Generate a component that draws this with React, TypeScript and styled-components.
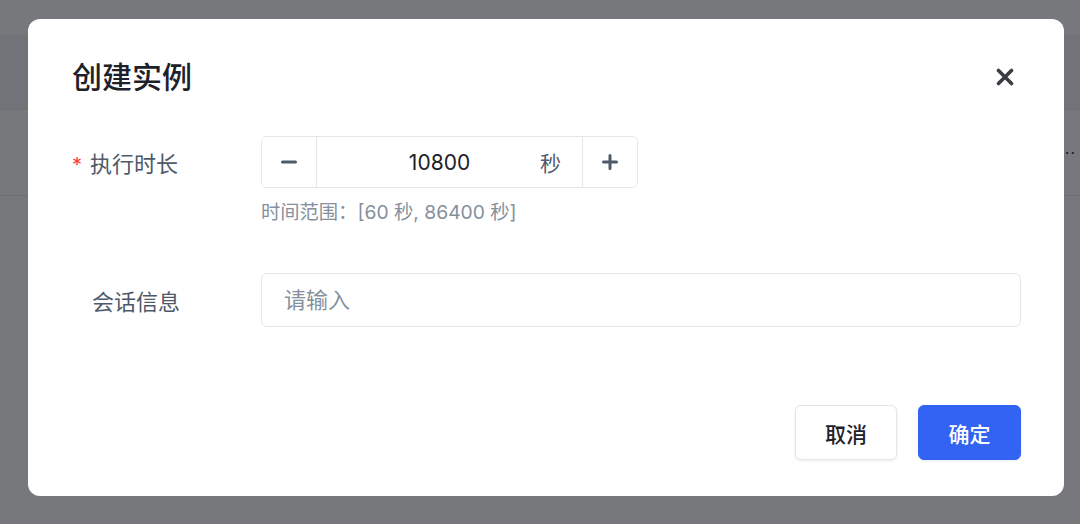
import React from 'react';
import styled, { createGlobalStyle } from 'styled-components';

const GlobalStyle = createGlobalStyle`
  html, body {
    margin: 0;
    padding: 0;
    background: #ffffff;
  }
  body {
    font-family: "Inter", "Noto Sans CJK SC", sans-serif;
    -webkit-font-smoothing: antialiased;
  }
  * {
    box-sizing: border-box;
  }
`;

// 背后的页面
const Page = styled.div`
  width: 1080px;
  height: 524px;
  overflow: hidden;
  background: #ffffff;
`;

const TopBar = styled.div`
  height: 35px;
  background: #ffffff;
`;

const TableHead = styled.div`
  height: 75px;
  background: #f2f3f5;
  border-bottom: 1px solid #e5e6eb;
`;

const TableRow = styled.div`
  height: 86px;
  display: flex;
  align-items: center;
  justify-content: flex-end;
  padding-right: 4px;
  border-bottom: 1px solid #e5e6eb;
  color: #1d2129;
  font-size: 16px;
  letter-spacing: 1px;
`;

// 遮罩层
const Mask = styled.div`
  position: fixed;
  inset: 0;
  background: rgba(29, 30, 36, 0.6);
  display: flex;
  align-items: flex-start;
  padding: 19px 0 0 28px;
`;

const Modal = styled.div`
  width: 1036px;
  height: 477px;
  background: #ffffff;
  border-radius: 12px;
  display: flex;
  flex-direction: column;
  padding: 44px 43px 36px 44px;
`;

const Header = styled.div`
  display: flex;
  align-items: center;
  justify-content: space-between;
  height: 28px;
`;

const Title = styled.h2`
  margin: 0;
  font-size: 30px;
  line-height: 28px;
  font-weight: 500;
  color: #1d2129;
`;

const CloseButton = styled.button`
  border: none;
  background: transparent;
  padding: 0;
  margin-right: 6px;
  width: 20px;
  height: 20px;
  display: flex;
  align-items: center;
  justify-content: center;
  color: #3a3d44;
  cursor: pointer;
`;

const Body = styled.div`
  margin-top: 45px;
  display: flex;
  flex-direction: column;
  gap: 49px;
`;

const FormRow = styled.div`
  display: flex;
  align-items: flex-start;
`;

const Label = styled.div<{ $height: number; $pr?: number }>`
  width: 189px;
  flex: none;
  height: ${(p) => p.$height}px;
  display: flex;
  align-items: center;
  justify-content: flex-end;
  padding-right: ${(p) => p.$pr ?? 81}px;
  font-size: 22px;
  color: #4e5969;
  white-space: nowrap;
`;

const Star = styled.span`
  color: #f53f3f;
  font-size: 20px;
  margin-right: 8px;
  transform: translateY(3px);
`;

const Control = styled.div`
  flex: 1;
  min-width: 0;
  display: flex;
  flex-direction: column;
`;

const NumberBox = styled.div`
  width: 377px;
  height: 52px;
  display: flex;
  border: 1.5px solid #e5e6eb;
  border-radius: 6px;
  overflow: hidden;
`;

const StepButton = styled.button<{ $side: 'left' | 'right' }>`
  width: 55px;
  flex: none;
  border: none;
  background: #ffffff;
  ${(p) => (p.$side === 'left' ? 'border-right' : 'border-left')}: 1.5px solid #e5e6eb;
  display: flex;
  align-items: center;
  justify-content: center;
  color: #4e5969;
  padding: 0;
  cursor: pointer;
`;

const NumberInner = styled.div`
  flex: 1;
  min-width: 0;
  display: flex;
  align-items: center;
  padding-right: 21px;
`;

const NumberValue = styled.input`
  flex: 1;
  width: 0;
  min-width: 0;
  border: none;
  outline: none;
  background: transparent;
  text-align: center;
  padding: 0 0 0 22px;
  font-family: inherit;
  font-size: 21px;
  color: #1d2129;
`;

const Suffix = styled.span`
  font-size: 21px;
  color: #4e5969;
`;

const Help = styled.div`
  margin-top: 12px;
  font-size: 19.3px;
  line-height: 24px;
  color: #86909c;
`;

const TextInput = styled.input`
  width: 760px;
  height: 54px;
  border: 1.5px solid #e5e6eb;
  border-radius: 6px;
  padding: 0 22px;
  font-family: inherit;
  font-size: 22px;
  color: #1d2129;
  outline: none;

  &::placeholder {
    color: #86909c;
  }
`;

const Footer = styled.div`
  margin-top: auto;
  display: flex;
  justify-content: flex-end;
  gap: 21px;
`;

const Button = styled.button<{ $primary?: boolean }>`
  width: 103px;
  height: 55px;
  border-radius: 6px;
  font-family: inherit;
  font-size: 21px;
  font-weight: 500;
  cursor: pointer;
  border: 1.5px solid ${(p) => (p.$primary ? '#3263f3' : '#e5e6eb')};
  background: ${(p) => (p.$primary ? '#3263f3' : '#ffffff')};
  color: ${(p) => (p.$primary ? '#ffffff' : '#1d2129')};
  box-shadow: 0 1px 3px rgba(0, 0, 0, 0.08);
`;

const CloseIcon = () => (
  <svg width="18" height="18" viewBox="0 0 18 18">
    <path d="M2.5 2.5 L15.5 15.5 M15.5 2.5 L2.5 15.5" stroke="currentColor" strokeWidth="3.6" strokeLinecap="round" />
  </svg>
);

const MinusIcon = () => (
  <svg width="16" height="16" viewBox="0 0 16 16">
    <path d="M1.5 8 H14.5" stroke="currentColor" strokeWidth="3" strokeLinecap="round" />
  </svg>
);

const PlusIcon = () => (
  <svg width="16" height="16" viewBox="0 0 16 16">
    <path d="M1.5 8 H14.5 M8 1.5 V14.5" stroke="currentColor" strokeWidth="3" strokeLinecap="round" />
  </svg>
);

const App: React.FC = () => {
  return (
    <>
      <GlobalStyle />
      <Page>
        <TopBar />
        <TableHead />
        <TableRow>···</TableRow>
      </Page>
      <Mask>
        <Modal>
          <Header>
            <Title>创建实例</Title>
            <CloseButton aria-label="关闭">
              <CloseIcon />
            </CloseButton>
          </Header>

          <Body>
            <FormRow>
              <Label $height={52} $pr={83}>
                <Star>*</Star>执行时长
              </Label>
              <Control>
                <NumberBox>
                  <StepButton $side="left" aria-label="减少">
                    <MinusIcon />
                  </StepButton>
                  <NumberInner>
                    <NumberValue defaultValue="10800" />
                    <Suffix>秒</Suffix>
                  </NumberInner>
                  <StepButton $side="right" aria-label="增加">
                    <PlusIcon />
                  </StepButton>
                </NumberBox>
                <Help>时间范围：[60 秒, 86400 秒]</Help>
              </Control>
            </FormRow>

            <FormRow>
              <Label $height={54}>会话信息</Label>
              <Control>
                <TextInput placeholder="请输入" />
              </Control>
            </FormRow>
          </Body>

          <Footer>
            <Button style={{ width: 102 }}>取消</Button>
            <Button $primary>确定</Button>
          </Footer>
        </Modal>
      </Mask>
    </>
  );
};

export default App;
